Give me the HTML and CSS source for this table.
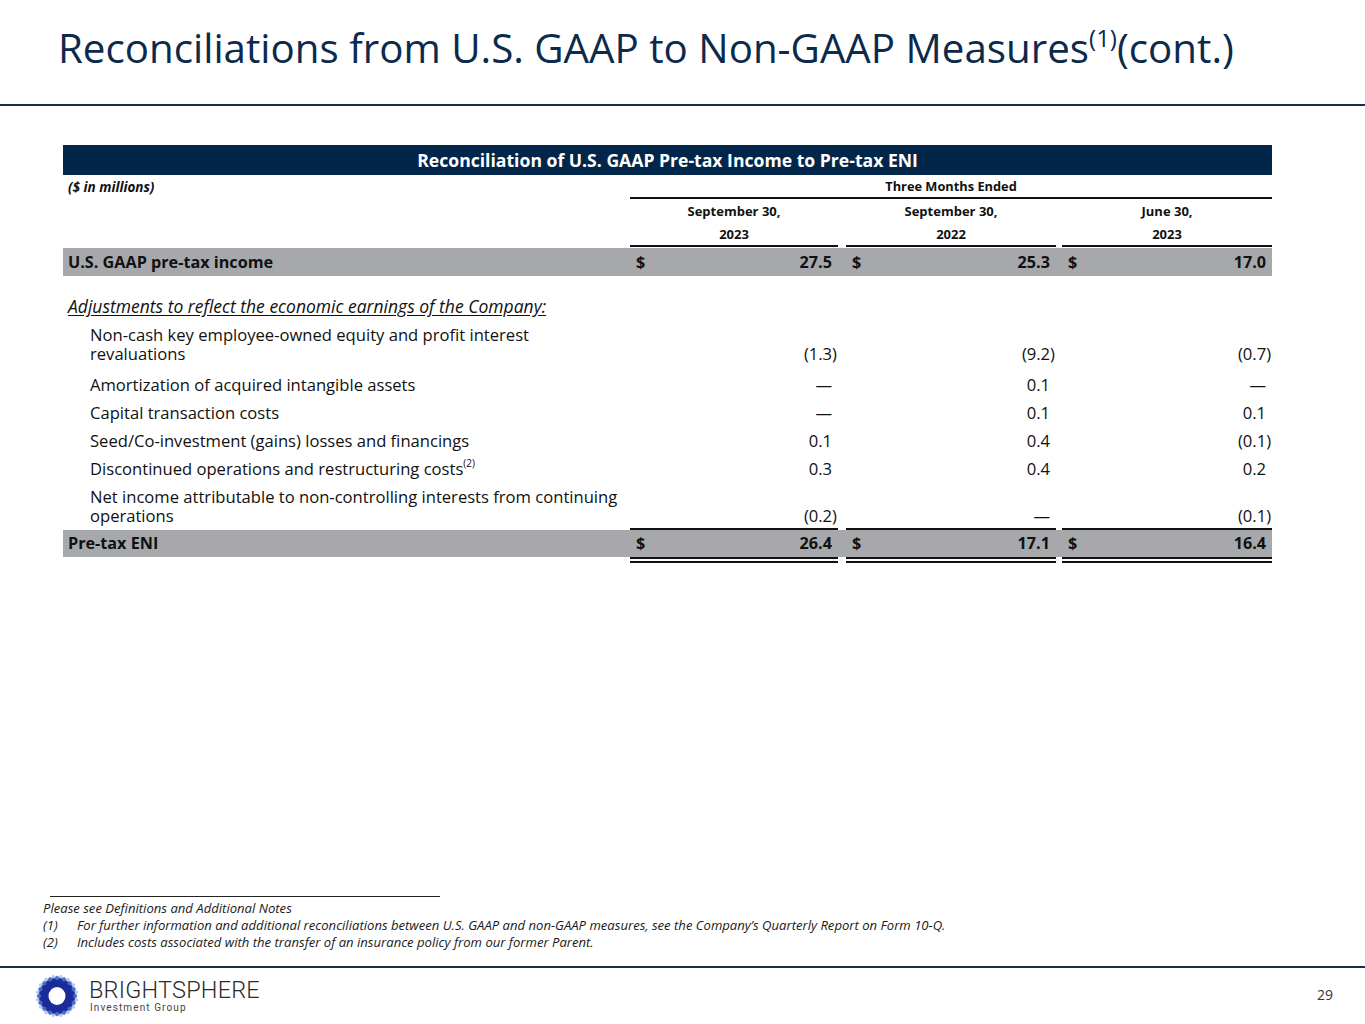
FILE: index.html
```html
<!DOCTYPE html>
<html lang="en">
<head>
<meta charset="utf-8">
<title>Reconciliations from U.S. GAAP to Non-GAAP Measures</title>
<link rel="stylesheet" href="styles.css">
</head>
<body>
<div class="page">
  <header class="title-bar">
    <h1 class="title">Reconciliations from U.S. GAAP to Non-GAAP Measures<sup class="title-sup">(1)</sup>(cont.)</h1>
  </header>

  <main class="content">
    <table class="recon">
      <colgroup>
        <col class="c-label">
        <col class="c-v1">
        <col class="c-gap1">
        <col class="c-v2">
        <col class="c-gap2">
        <col class="c-v3">
      </colgroup>
      <thead>
        <tr class="banner"><th colspan="6">Reconciliation of U.S. GAAP Pre-tax Income to Pre-tax ENI</th></tr>
        <tr class="units">
          <td class="lbl">($ in millions)</td>
          <td colspan="5" class="period">Three Months Ended</td>
        </tr>
        <tr class="colhead">
          <td></td>
          <td>September 30,</td><td></td>
          <td>September 30,</td><td></td>
          <td>June 30,</td>
        </tr>
        <tr class="colhead year">
          <td></td>
          <td class="ul">2023</td><td></td>
          <td class="ul">2022</td><td></td>
          <td class="ul">2023</td>
        </tr>
      </thead>
      <tbody>
        <tr class="total first">
          <td class="lbl">U.S. GAAP pre-tax income</td>
          <td class="val"><span class="cur">$</span><span class="num pos">27.5</span></td><td></td>
          <td class="val"><span class="cur">$</span><span class="num pos">25.3</span></td><td></td>
          <td class="val"><span class="cur">$</span><span class="num pos">17.0</span></td>
        </tr>
        <tr class="blank"><td colspan="6"></td></tr>
        <tr class="row">
          <td class="lbl section" colspan="6"><span>Adjustments to reflect the economic earnings of the Company:</span></td>
        </tr>
        <tr class="row two">
          <td class="lbl sub">Non-cash key employee-owned equity and profit interest<br>revaluations</td>
          <td class="val"><span class="num">(1.3)</span></td><td></td>
          <td class="val"><span class="num">(9.2)</span></td><td></td>
          <td class="val"><span class="num">(0.7)</span></td>
        </tr>
        <tr class="row">
          <td class="lbl sub">Amortization of acquired intangible assets</td>
          <td class="val"><span class="num pos">—</span></td><td></td>
          <td class="val"><span class="num pos">0.1</span></td><td></td>
          <td class="val"><span class="num pos">—</span></td>
        </tr>
        <tr class="row">
          <td class="lbl sub">Capital transaction costs</td>
          <td class="val"><span class="num pos">—</span></td><td></td>
          <td class="val"><span class="num pos">0.1</span></td><td></td>
          <td class="val"><span class="num pos">0.1</span></td>
        </tr>
        <tr class="row">
          <td class="lbl sub">Seed/Co-investment (gains) losses and financings</td>
          <td class="val"><span class="num pos">0.1</span></td><td></td>
          <td class="val"><span class="num pos">0.4</span></td><td></td>
          <td class="val"><span class="num">(0.1)</span></td>
        </tr>
        <tr class="row">
          <td class="lbl sub">Discontinued operations and restructuring costs<sup class="fn">(2)</sup></td>
          <td class="val"><span class="num pos">0.3</span></td><td></td>
          <td class="val"><span class="num pos">0.4</span></td><td></td>
          <td class="val"><span class="num pos">0.2</span></td>
        </tr>
        <tr class="row two last">
          <td class="lbl sub">Net income attributable to non-controlling interests from continuing<br>operations</td>
          <td class="val"><span class="num">(0.2)</span></td><td></td>
          <td class="val"><span class="num pos">—</span></td><td></td>
          <td class="val"><span class="num">(0.1)</span></td>
        </tr>
        <tr class="total grand">
          <td class="lbl">Pre-tax ENI</td>
          <td class="val"><span class="cur">$</span><span class="num pos">26.4</span></td><td class="gap"></td>
          <td class="val"><span class="cur">$</span><span class="num pos">17.1</span></td><td class="gap"></td>
          <td class="val"><span class="cur">$</span><span class="num pos">16.4</span></td>
        </tr>
      </tbody>
    </table>
  </main>

  <section class="notes">
    <div class="notes-rule"></div>
    <p class="note">Please see Definitions and Additional Notes</p>
    <p class="note item"><span class="note-no">(1)</span><span>For further information and additional reconciliations between U.S. GAAP and non-GAAP measures, see the Company’s Quarterly Report on Form 10-Q.</span></p>
    <p class="note item"><span class="note-no">(2)</span><span>Includes costs associated with the transfer of an insurance policy from our former Parent.</span></p>
  </section>

  <footer class="footer">
    <div class="brand">
      <svg class="brand-mark" viewBox="0 0 46 46" width="46" height="46" aria-hidden="true">
        <g transform="translate(23 23)">
          <g fill="#b5caee">
            <rect x="-15.5" y="-15.5" width="31" height="31" transform="rotate(11.25)"/>
            <rect x="-15.5" y="-15.5" width="31" height="31" transform="rotate(33.75)"/>
            <rect x="-15.5" y="-15.5" width="31" height="31" transform="rotate(56.25)"/>
            <rect x="-15.5" y="-15.5" width="31" height="31" transform="rotate(78.75)"/>
          </g>
          <g fill="#4a6cc6">
            <rect x="-14.5" y="-14.5" width="29" height="29" transform="rotate(0)"/>
            <rect x="-14.5" y="-14.5" width="29" height="29" transform="rotate(22.5)"/>
            <rect x="-14.5" y="-14.5" width="29" height="29" transform="rotate(45)"/>
            <rect x="-14.5" y="-14.5" width="29" height="29" transform="rotate(67.5)"/>
          </g>
          <g fill="#1a2c9a">
            <rect x="-13" y="-13" width="26" height="26" transform="rotate(11.25)"/>
            <rect x="-13" y="-13" width="26" height="26" transform="rotate(33.75)"/>
            <rect x="-13" y="-13" width="26" height="26" transform="rotate(56.25)"/>
            <rect x="-13" y="-13" width="26" height="26" transform="rotate(78.75)"/>
          </g>
          <ellipse rx="8.5" ry="9" fill="#ffffff"/>
        </g>
      </svg>
      <div class="brand-text">
        <div class="brand-name">BRIGHTSPHERE</div>
        <div class="brand-sub">Investment Group</div>
      </div>
    </div>
    <div class="page-no">29</div>
  </footer>
</div>
</body>
</html>
```

FILE: styles.css
```css
* { box-sizing: border-box; }

html, body {
  margin: 0;
  padding: 0;
  background: #ffffff;
}

body {
  font-family: "Open Sans", "Noto Sans", "Liberation Sans", sans-serif;
  color: #111111;
}

.page {
  width: 1365px;
  height: 1024px;
  display: flex;
  flex-direction: column;
  overflow: hidden;
}

/* ---------- Title ---------- */
.title-bar {
  height: 106px;
  border-bottom: 2px solid #14304f;
  padding: 20px 0 0 58px;
}

.title {
  margin: 0;
  font-weight: 400;
  font-size: 40.3px;
  line-height: 56px;
  color: #0b2a4c;
  white-space: nowrap;
}

.title-sup {
  font-size: 24px;
  line-height: 0;
  position: relative;
  top: -2px;
}

/* ---------- Table ---------- */
.content {
  padding: 39px 0 0 63px;
}

.recon {
  width: 1209px;
  table-layout: fixed;
  border-collapse: separate;
  border-spacing: 0;
}

.c-label { width: 567px; }
.c-v1 { width: 208px; }
.c-gap1 { width: 8px; }
.c-v2 { width: 210px; }
.c-gap2 { width: 6px; }
.c-v3 { width: 210px; }

.recon td, .recon th {
  padding: 0;
}

.banner th {
  background: #02264a;
  color: #ffffff;
  font-weight: 700;
  font-size: 17.6px;
  height: 30px;
  text-align: center;
  vertical-align: middle;
}

.units td {
  height: 24px;
  font-size: 13.5px;
  font-weight: 700;
  vertical-align: middle;
}

.recon .units .lbl {
  font-style: italic;
  padding-left: 5px;
}

.units .period {
  text-align: center;
  font-size: 12.8px;
  border-bottom: 2px solid #111111;
}

.colhead td {
  height: 24px;
  font-size: 13px;
  font-weight: 700;
  text-align: center;
  vertical-align: middle;
}

.colhead td.ul {
  border-bottom: 2px solid #111111;
}

/* body rows */
.recon tbody td {
  font-size: 16.6px;
  line-height: 19px;
}

.recon .lbl {
  padding-left: 5px;
}

.recon .lbl.sub {
  padding-left: 27px;
  white-space: nowrap;
}

.total td {
  background: #a6a8ab;
  font-weight: 700;
  height: 29px;
  vertical-align: middle;
  background-clip: padding-box;
}

.recon .total td {
  font-size: 16.2px;
}

.total.first td {
  border-top: 1px solid transparent;
}

.recon .val {
  text-align: right;
  padding-right: 1px;
}

.val .cur {
  float: left;
  padding-left: 6px;
}

.num.pos {
  padding-right: 5px;
}

.blank td {
  height: 16px;
}

.recon .row td {
  padding-top: 5px;
  padding-bottom: 4px;
  vertical-align: bottom;
}

.recon .row.two td {
  padding-bottom: 7px;
}

.recon .row.two.last td {
  padding-bottom: 3px;
}

.section span {
  font-size: 17.5px;
  font-style: italic;
  text-decoration: underline;
  text-underline-offset: 2px;
}

.fn {
  font-size: 10px;
  line-height: 0;
  position: relative;
  top: -1px;
}

.grand td {
  height: 35px;
  border-top: 2px solid transparent;
  border-bottom: 6px solid transparent;
}

.grand td.val {
  border-top: 2px solid #111111;
  border-bottom: 6px double #111111;
}

.grand td.lbl,
.grand td.gap {
  border-bottom: 6px solid #ffffff;
}

/* ---------- Notes ---------- */
.notes {
  margin-top: auto;
  padding-bottom: 15px;
}

.notes-rule {
  margin-left: 50px;
  width: 390px;
  border-top: 1px solid #222222;
  margin-bottom: 3px;
}

.note {
  margin: 0;
  padding-left: 43px;
  font-size: 13.1px;
  line-height: 17px;
  font-style: italic;
  color: #1a1a1a;
}

.note.item {
  display: flex;
}

.note-no {
  width: 34px;
  flex: none;
}

/* ---------- Footer ---------- */
.footer {
  height: 58px;
  border-top: 2px solid #14304f;
  display: flex;
  align-items: center;
  justify-content: space-between;
  padding: 0 32px 0 34px;
}

.brand {
  display: flex;
  align-items: center;
  gap: 9px;
}

.brand-mark {
  display: block;
}

.brand-text {
  font-family: "Roboto", "Liberation Sans", sans-serif;
  color: #2b2b2b;
}

.brand-name {
  font-size: 23.5px;
  font-weight: 300;
  line-height: 24px;
  letter-spacing: 0.2px;
}

.brand-sub {
  font-size: 10px;
  line-height: 12px;
  letter-spacing: 1.1px;
  color: #444444;
  padding-left: 1px;
}

.page-no {
  font-size: 14px;
  color: #333333;
  padding-bottom: 4px;
}
```
